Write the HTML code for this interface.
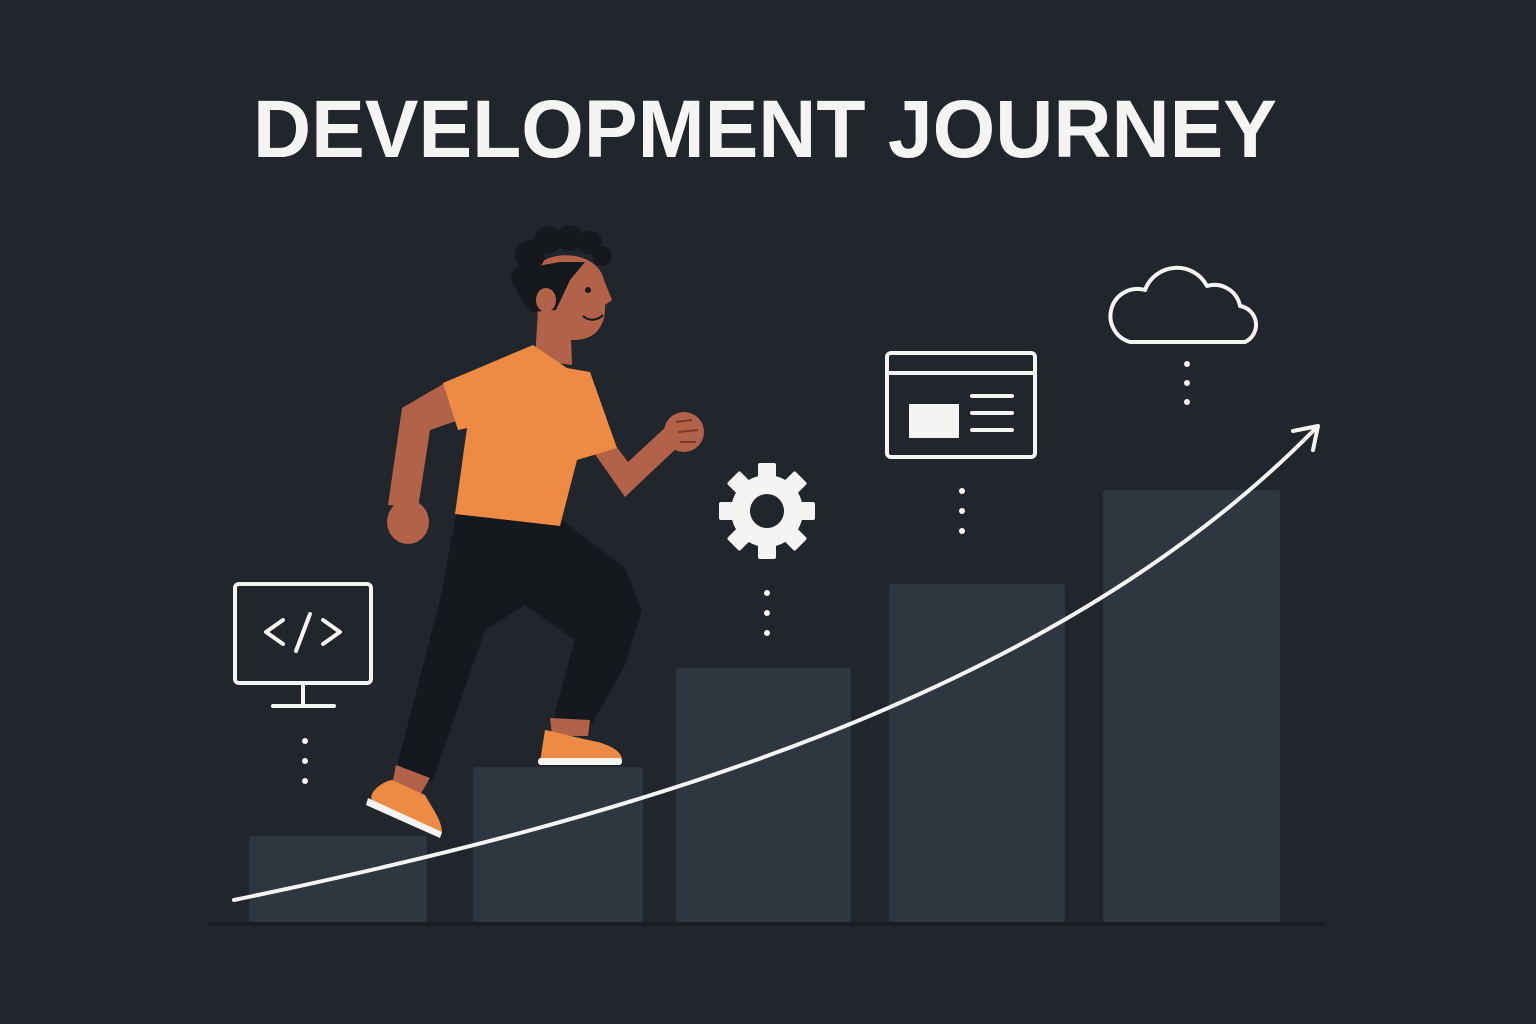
<!DOCTYPE html>
<html><head><meta charset="utf-8"><style>
html,body{margin:0;padding:0;background:#21252c;}
svg{display:block;}
</style></head><body>
<svg width="1536" height="1024" viewBox="0 0 1536 1024" xmlns="http://www.w3.org/2000/svg">
<rect width="1536" height="1024" fill="#21252c"/>
<text x="765" y="157" text-anchor="middle" font-family="Liberation Sans, sans-serif" font-weight="bold" font-size="82" fill="#f4f4f2" textLength="1024" lengthAdjust="spacingAndGlyphs">DEVELOPMENT JOURNEY</text>

<g fill="#2e3640">
<rect x="249" y="836" width="178" height="87" rx="3"/>
<rect x="473" y="767" width="170" height="156" rx="3"/>
<rect x="676" y="668" width="175" height="255" rx="3"/>
<rect x="889" y="584" width="176" height="339" rx="3"/>
<rect x="1103" y="490" width="177" height="433" rx="3"/>
</g>
<rect x="208" y="922" width="1117" height="4" fill="#1a1d22"/>

<g fill="none" stroke="#f4f4f2" stroke-width="4" stroke-linecap="round" stroke-linejoin="round">
<rect x="235" y="584" width="136" height="99" rx="4"/>
<path d="M303 684 V705 M273 706 H334"/>
<path d="M283 620 L266 632 L283 644 M323 620 L340 632 L323 644 M310 614 L296 651"/>
<rect x="887" y="353" width="148" height="104" rx="4"/>
<path d="M887 373 H1035 M972 396 H1012 M972 413 H1012 M972 430 H1012"/>
<path d="M1130 342 H1245 A19 19 0 0 0 1240 306 A26 26 0 0 0 1207 286 A34 34 0 0 0 1145 290 A26 26 0 0 0 1130 342 Z"/>
<path d="M234 900 C 620 820, 1050 700, 1316 428" stroke-width="4"/>
<path d="M1293 431 L1318 426 L1313 450" stroke-width="4"/>
</g>
<rect x="909" y="404" width="50" height="34" fill="#f4f4f2"/>
<g fill="#f4f4f2">
<g transform="translate(767,511)">
<rect x="-9" y="-48" width="18" height="96" rx="2"/>
<rect x="-9" y="-48" width="18" height="96" rx="2" transform="rotate(45)"/>
<rect x="-9" y="-48" width="18" height="96" rx="2" transform="rotate(90)"/>
<rect x="-9" y="-48" width="18" height="96" rx="2" transform="rotate(135)"/>
<circle r="36"/>
<circle r="17" fill="#21252c"/>
</g>
<circle cx="305" cy="741" r="3"/><circle cx="305" cy="761" r="3"/><circle cx="305" cy="781" r="3"/>
<circle cx="767" cy="593" r="3"/><circle cx="767" cy="613" r="3"/><circle cx="767" cy="633" r="3"/>
<circle cx="962" cy="491" r="3"/><circle cx="962" cy="511" r="3"/><circle cx="962" cy="531" r="3"/>
<circle cx="1187" cy="364" r="3"/><circle cx="1187" cy="383" r="3"/><circle cx="1187" cy="402" r="3"/>
</g>

<g>
<path d="M450 380 L402 408 L388 505 L418 508 L430 430 L465 418 Z" fill="#b3624a"/>
<ellipse cx="408" cy="522" rx="21" ry="22" fill="#b3624a"/>
<path d="M585 440 L625 497 L680 445 L668 425 L628 462 L600 425 Z" fill="#b3624a"/>
<ellipse cx="684" cy="432" rx="20" ry="20" fill="#b3624a"/>
<path d="M676 422 L692 420 M678 432 L698 430 M680 442 L696 442" stroke="#7a3a2a" stroke-width="2" fill="none"/>
<path d="M538 310 L570 310 L572 365 L535 360 Z" fill="#b3624a"/>
<path d="M457 510 L562 520 L625 568 L642 610 L625 665 L592 724 L552 722 L575 640 L525 605 L485 630 L432 782 L396 770 L440 600 Z" fill="#15181d"/>
<path d="M443 383 L533 345 L567 368 L590 372 L617 448 L577 460 L560 526 L455 514 L467 428 L458 430 Z" fill="#ed8b45"/>
<path d="M550 718 L590 720 L588 736 L552 736 Z" fill="#b3624a"/>
<path d="M396 765 L430 778 L420 795 L392 785 Z" fill="#b3624a"/>
<path d="M545 730 C555 732 578 738 598 742 C612 746 622 752 622 760 L540 762 Z" fill="#ed8b45"/>
<rect x="538" y="758" width="84" height="7" rx="3" fill="#f4f4f2"/>
<path d="M392 780 L425 795 C432 808 442 820 442 833 L372 800 C368 794 380 782 392 780 Z" fill="#ed8b45"/>
<path d="M368 798 L442 832 L440 838 L366 805 Z" fill="#f4f4f2"/>
<!-- head -->
<path d="M535 270 C545 248 598 250 604 280 L612 300 L605 305 C606 325 596 340 574 340 C555 340 540 325 535 305 Z" fill="#b3624a"/>
<g fill="#15181d">
<circle cx="530" cy="255" r="15"/><circle cx="548" cy="240" r="14"/><circle cx="570" cy="238" r="13"/>
<circle cx="590" cy="243" r="12"/><circle cx="602" cy="256" r="10"/><circle cx="523" cy="278" r="12"/>
<path d="M515 270 L560 262 L585 262 L570 280 L556 310 L532 312 C518 300 514 285 515 270 Z"/>
</g>
<ellipse cx="546" cy="300" rx="10" ry="12" fill="#b3624a"/>
<circle cx="588" cy="290" r="3" fill="#15181d"/>
<path d="M583 316 C590 322 598 320 603 315" stroke="#15181d" stroke-width="2" fill="none"/>
</g>
</svg>
</body></html>
